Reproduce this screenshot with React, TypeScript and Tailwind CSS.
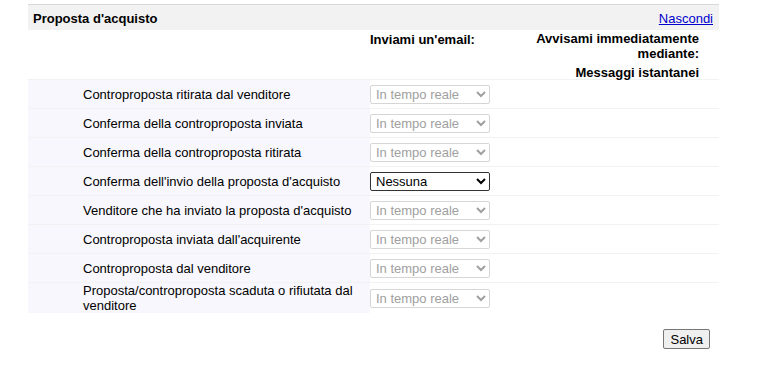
import React, { useState } from 'react';

const rows = [
  'Controproposta ritirata dal venditore',
  'Conferma della controproposta inviata',
  'Conferma della controproposta ritirata',
  "Conferma dell'invio della proposta d'acquisto",
  "Venditore che ha inviato la proposta d'acquisto",
  "Controproposta inviata dall'acquirente",
  'Controproposta dal venditore',
  'Proposta/controproposta scaduta o rifiutata dal venditore',
];

const App: React.FC = () => {
  const [offerNotice, setOfferNotice] = useState('Nessuna'); // only the enabled row

  return (
    <div className="w-[781px] h-[378px] bg-white text-black font-['Liberation_Sans',Arial,sans-serif] text-[13px] leading-[15px]">
      <div className="ml-[28px] w-[691px] pt-[4px]">
        {/* section header */}
        <div className="h-[26px] border-t border-[#d9d9d9] bg-[#f2f2f2] flex items-center justify-between pt-[2px] pl-[5px] pr-[6px]">
          <span className="font-bold">Proposta d'acquisto</span>
          <a href="#" className="text-[#0000cc] underline">Nascondi</a>
        </div>

        {/* column headers */}
        <div className="grid grid-cols-[342px_150px_1fr] h-[49px] pt-[1px] font-bold">
          <div />
          <div className="pt-[1px]">Inviami un'email:</div>
          <div className="flex flex-col items-end pr-[20px] text-right">
            <div className="w-[170px]">Avvisami immediatamente mediante:</div>
            <div className="mt-[4px]">Messaggi istantanei</div>
          </div>
        </div>

        {/* notification rows */}
        <div>
          {rows.map((label, i) => {
            const enabled = i === 3;
            return (
              <div key={i} className="grid grid-cols-[342px_150px_1fr] border-t border-[#f2f2f2]">
                <div className="bg-[#f7f7fd] flex items-center pl-[55px] pr-[6px] min-h-[28px]">
                  <span>{label}</span>
                </div>
                <div className="flex items-center">
                  {enabled ? (
                    <select
                      value={offerNotice}
                      onChange={e => setOfferNotice(e.target.value)}
                      className="w-[120px] h-[19px] border border-[#333] rounded-[2px] bg-white text-black text-[13px] pl-[1px]"
                    >
                      <option>Nessuna</option>
                      <option>In tempo reale</option>
                    </select>
                  ) : (
                    <select
                      disabled
                      defaultValue="In tempo reale"
                      className="w-[120px] h-[19px] border border-[#d6d6d6] rounded-[2px] bg-white text-[#a0a0a0] text-[13px] pl-[1px]"
                    >
                      <option>In tempo reale</option>
                      <option>Nessuna</option>
                    </select>
                  )}
                </div>
                <div />
              </div>
            );
          })}
        </div>

        <div className="flex justify-end pr-[9px] mt-[16px]">
          <button className="h-[20px] px-[6px] bg-[#efefef] border border-[#767676] rounded-[2px] text-[13px]">
            Salva
          </button>
        </div>
      </div>
    </div>
  );
};

export default App;
